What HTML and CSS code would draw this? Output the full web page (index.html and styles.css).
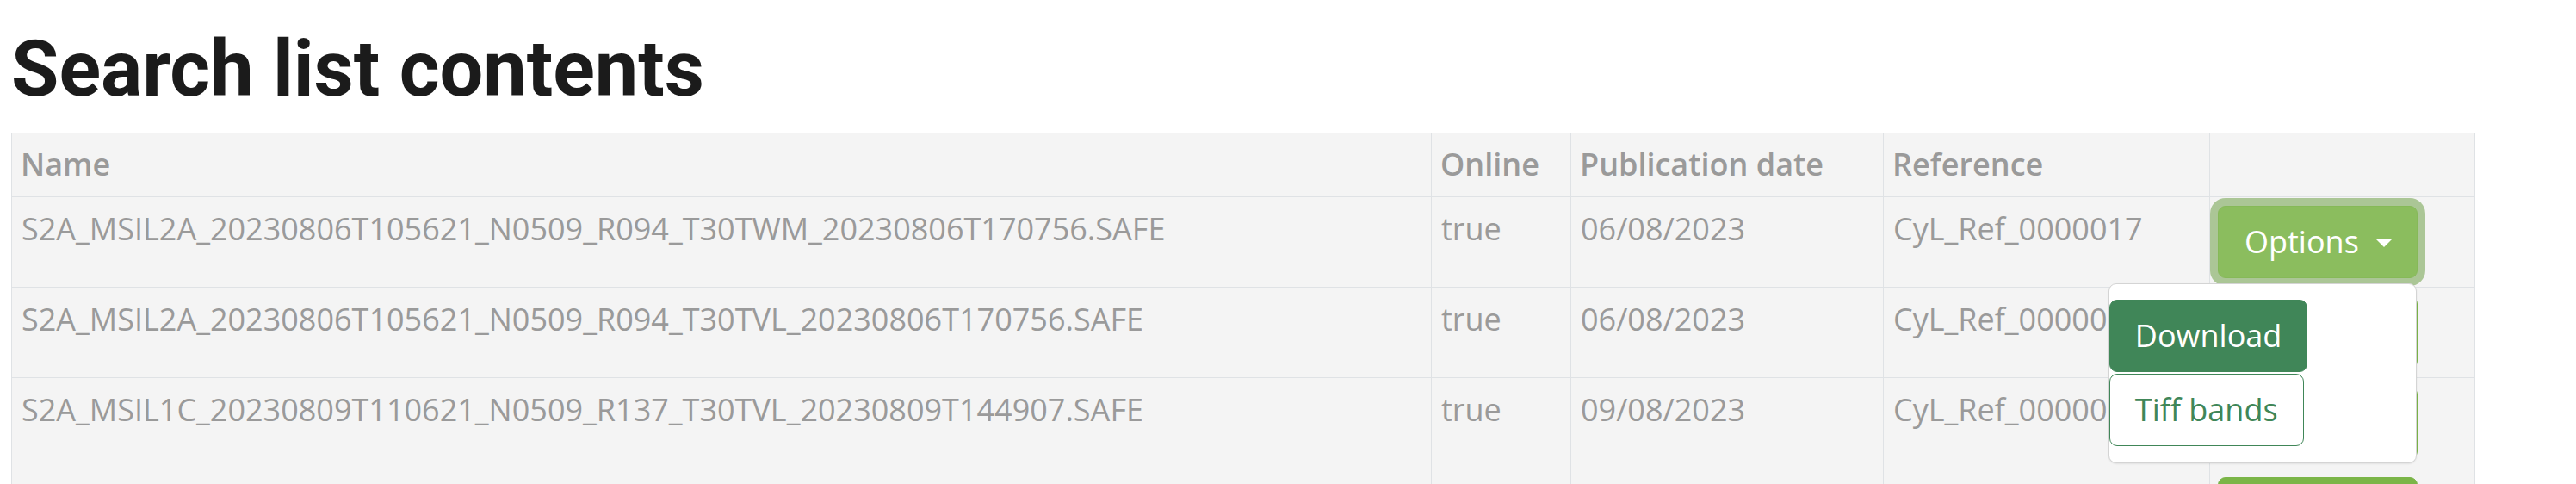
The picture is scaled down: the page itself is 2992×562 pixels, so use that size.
FILE: index.html
```html
<!DOCTYPE html>
<html lang="en">
<head>
<meta charset="utf-8">
<title>Search list contents</title>
<link rel="stylesheet" href="styles.css">
</head>
<body>
<main class="page">
  <h1 class="title">Search list contents</h1>
  <table class="results">
    <colgroup>
      <col class="c-name">
      <col class="c-online">
      <col class="c-date">
      <col class="c-ref">
      <col class="c-opt">
    </colgroup>
    <thead>
      <tr>
        <th>Name</th>
        <th>Online</th>
        <th>Publication date</th>
        <th>Reference</th>
        <th></th>
      </tr>
    </thead>
    <tbody>
      <tr>
        <td>S2A_MSIL2A_20230806T105621_N0509_R094_T30TWM_20230806T170756.SAFE</td>
        <td>true</td>
        <td>06/08/2023</td>
        <td>CyL_Ref_0000017</td>
        <td>
          <div class="dropdown">
            <button class="btn-options is-open" type="button">Options<span class="caret"></span></button>
            <div class="menu">
              <button class="btn-menu btn-solid" type="button">Download</button>
              <button class="btn-menu btn-outline" type="button">Tiff bands</button>
            </div>
          </div>
        </td>
      </tr>
      <tr>
        <td>S2A_MSIL2A_20230806T105621_N0509_R094_T30TVL_20230806T170756.SAFE</td>
        <td>true</td>
        <td>06/08/2023</td>
        <td><span class="ref-clip">CyL_Ref_00000</span></td>
        <td><div class="dropdown"><button class="btn-options" type="button">Options<span class="caret"></span></button></div></td>
      </tr>
      <tr>
        <td>S2A_MSIL1C_20230809T110621_N0509_R137_T30TVL_20230809T144907.SAFE</td>
        <td>true</td>
        <td>09/08/2023</td>
        <td><span class="ref-clip">CyL_Ref_00000</span></td>
        <td><div class="dropdown"><button class="btn-options" type="button">Options<span class="caret"></span></button></div></td>
      </tr>
      <tr>
        <td></td>
        <td></td>
        <td></td>
        <td></td>
        <td><div class="dropdown"><button class="btn-options" type="button">Options<span class="caret"></span></button></div></td>
      </tr>
    </tbody>
  </table>
</main>
</body>
</html>
```
FILE: styles.css
```css
* { box-sizing: border-box; }

html, body {
  margin: 0;
  padding: 0;
  background: #ffffff;
}

body {
  font-family: "Open Sans", "Liberation Sans", sans-serif;
  font-size: 36px;
  line-height: 1.5;
  color: #9a9a9a;
  overflow: hidden;
}

.page {
  padding: 27px 0 0 13px;
}

.title {
  margin: 0 0 19px 0;
  font-family: Roboto, "Liberation Sans", sans-serif;
  font-weight: 700;
  font-size: 90px;
  line-height: 1.2;
  color: #1b1b1b;
}

.results {
  width: 2861px;
  table-layout: fixed;
  border-collapse: collapse;
  background: #f4f4f4;
  border: 1px solid #dfe2e5;
}

.c-name { width: 1649px; }
.c-online { width: 162px; }
.c-date { width: 363px; }
.c-ref { width: 379px; }
.c-opt { width: 308px; }

.results th,
.results td {
  border: 1px solid #dfe2e5;
  text-align: left;
  white-space: nowrap;
  overflow: visible;
}

.results th {
  padding: 9px 10px 10px;
  font-weight: 600;
  color: #9a9a9a;
  vertical-align: bottom;
}

.results td {
  padding: 10px 10px 10px 11px;
  font-weight: 400;
  vertical-align: top;
}

.results td:last-child {
  padding-left: 9px;
}

.ref-clip {
  display: inline-block;
}

.dropdown {
  position: relative;
  display: inline-block;
}

.btn-options {
  display: inline-flex;
  align-items: center;
  margin: 0;
  padding: 14px 28px 14px 30px;
  font-family: "Open Sans", "Liberation Sans", sans-serif;
  font-size: 36px;
  line-height: 54px;
  color: #ffffff;
  background: #7bb548;
  border: 1px solid #7bb548;
  border-radius: 9px;
  cursor: pointer;
}

.btn-options.is-open {
  background: #8bbd5e;
  border-color: #86b958;
  box-shadow: 0 0 0 9px #abc696;
}

.caret {
  display: inline-block;
  width: 0;
  height: 0;
  margin-left: 19px;
  border-top: 10px solid #ffffff;
  border-left: 10px solid transparent;
  border-right: 10px solid transparent;
  position: relative;
  top: 1px;
}

.menu {
  position: absolute;
  right: 1px;
  top: calc(100% + 6px);
  z-index: 10;
  width: 358px;
  padding: 18px 0 19px;
  display: flex;
  flex-direction: column;
  align-items: flex-start;
  gap: 2px;
  background: #ffffff;
  border: 1px solid #d4d4d4;
  border-radius: 9px;
  box-shadow: 0 1px 2px rgba(0, 0, 0, 0.08);
}

.btn-menu {
  margin: 0;
  padding: 14px 29px;
  font-family: "Open Sans", "Liberation Sans", sans-serif;
  font-size: 36px;
  line-height: 54px;
  border-radius: 9px;
  cursor: pointer;
}

.btn-solid {
  color: #ffffff;
  background: #408658;
  border: 1px solid #408658;
}

.btn-outline {
  color: #408658;
  background: #ffffff;
  border: 1.5px solid #408658;
}
```
